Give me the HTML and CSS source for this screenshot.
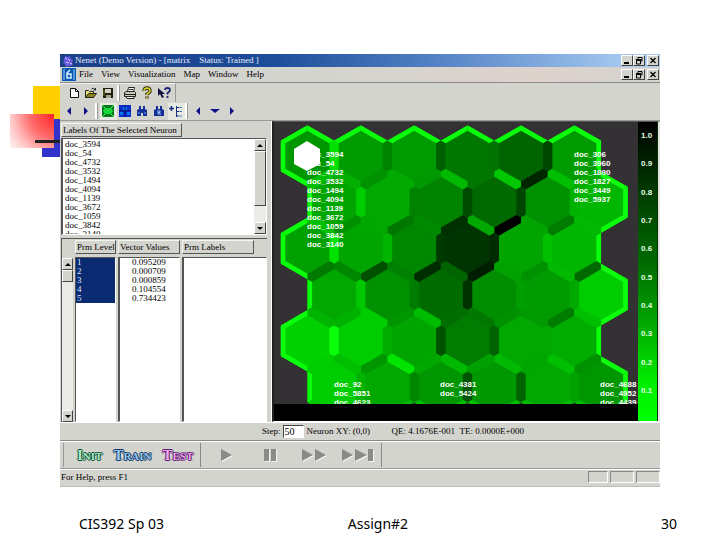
FILE: index.html
```html
<!DOCTYPE html>
<html lang="en">
<head>
<meta charset="utf-8">
<title>CIS392 Sp 03 - Assign#2</title>
<link rel="stylesheet" href="styles.css">
</head>
<body>
<main class="slide">
  <div class="deco" aria-hidden="true">
    <span class="deco-yellow"></span><span class="deco-blue"></span><span class="deco-red"></span><span class="deco-line"></span>
  </div>

  <section class="window">
    <header class="titlebar">
      <svg class="app-icon" viewBox="0 0 12 12"><path d="M3 1l3 1 2-1 1 3 2 1-1 3 1 2-3 1-2 0-2 1-1-3-2-1 1-3z" fill="#6b5be0"/><path d="M3 3l2 1M6 4l2 2M4 7l3 1M8 8l2 1" stroke="#d5c8ff"/></svg>
      <h1>Nenet (Demo Version) - [matrix&nbsp;&nbsp;&nbsp; Status: Trained ]</h1>
      <div class="controls">
        <button aria-label="Minimize"><svg viewBox="0 0 10 9"><path d="M2 7h5" stroke="#000" stroke-width="2"/></svg></button>
        <button aria-label="Restore"><svg viewBox="0 0 10 9"><path d="M4 3V1.500h4V5H6.500M2.500 4h4v4h-4z" fill="none" stroke="#000"/><path d="M2 4h5" stroke="#000" stroke-width="2"/></svg></button>
        <button class="close" aria-label="Close"><svg viewBox="0 0 10 9"><path d="M2.500 2l5 5M7.500 2l-5 5" stroke="#000" stroke-width="1.300"/></svg></button>
      </div>
    </header>
    <nav class="menubar">
      <svg class="doc-icon" viewBox="0 0 14 13"><path d="M0 0h14v13H0z" fill="#0a58b4"/><path d="M2 1v11M12 1v11" stroke="#9ad0f5"/><path d="M8 2L5 5v5h4V6H5" fill="none" stroke="#d8f4ff" stroke-width="1.500"/></svg>
      <div class="menus">
        <button>File</button><button>View</button><button>Visualization</button><button>Map</button><button>Window</button><button>Help</button>
      </div>
      <div class="controls">
        <button aria-label="Minimize map"><svg viewBox="0 0 10 9"><path d="M2 7h5" stroke="#000" stroke-width="2"/></svg></button>
        <button aria-label="Restore map"><svg viewBox="0 0 10 9"><path d="M4 3V1.500h4V5H6.500M2.500 4h4v4h-4z" fill="none" stroke="#000"/><path d="M2 4h5" stroke="#000" stroke-width="2"/></svg></button>
        <button class="close" aria-label="Close map"><svg viewBox="0 0 10 9"><path d="M2.500 2l5 5M7.500 2l-5 5" stroke="#000" stroke-width="1.300"/></svg></button>
      </div>
    </nav>

    <div class="toolbar files">
      <button aria-label="New"><svg viewBox="0 0 14 14"><path d="M3.500 2.500h5l3 3v6h-8z" fill="#fff" stroke="#111"/><path d="M8.500 2.500v3h3" fill="none" stroke="#111"/></svg></button>
      <button aria-label="Open"><svg viewBox="0 0 14 14"><path d="M1.500 11.500v-7h3l1 1h4v2" fill="#e8e070" stroke="#222"/><path d="M1.500 11.500l3-4h8l-3 4z" fill="#8c8410" stroke="#222"/><path d="M7.500 3q2-2 4 1m0-2v2H9.500" fill="none" stroke="#222"/></svg></button>
      <button aria-label="Save"><svg viewBox="0 0 14 14"><path d="M2 2h10v10H2z" fill="#202010"/><path d="M4 3h6v4H4z" fill="#d4d4c4"/><path d="M5 9h5v3H5z" fill="#a8a890"/><path d="M3 4v6" stroke="#77751b"/></svg></button>
      <span class="sep"></span>
      <button aria-label="Print"><svg viewBox="0 0 14 14"><path d="M4.500 5.500l1-4h6l-1 4" fill="#fff" stroke="#222"/><path d="M1.500 6.500l2-1h8l1 1v4h-11z" fill="#c9c9b8" stroke="#222"/><path d="M3 10.500h8v2H4zM2 8.500h10M6 3.500h4" fill="#fff" stroke="#222"/></svg></button>
      <button aria-label="About"><svg viewBox="0 0 14 14"><path d="M4 5q0-3 3-3t3 3q0 1.500-3 3v1M7 10.500v2" fill="none" stroke="#2b2a08" stroke-width="3.400"/><path d="M4 5q0-3 3-3t3 3q0 1.500-3 3v1M7 11v1.500" fill="none" stroke="#ded432" stroke-width="1.500"/></svg></button>
      <button aria-label="Context help"><svg viewBox="0 0 14 14"><path d="M1 2v8l2-2 2 4 2-1-2-3h3z" fill="#111144"/><path d="M8 4q0-2 2.500-2T13 4q0 1.500-2.500 3v1.500M10.500 10v2" fill="none" stroke="#1b2470" stroke-width="1.800"/></svg></button>
    </div>
    <div class="toolbar views">
      <button aria-label="Previous"><svg viewBox="0 0 14 14"><path d="M9 3v8L5 7z" fill="#10108c"/></svg></button>
      <button aria-label="Next"><svg viewBox="0 0 14 14"><path d="M5 3v8l4-4z" fill="#10108c"/></svg></button>
      <span class="sep"></span>
      <button class="pressed" aria-label="Hexagon view"><svg viewBox="0 0 14 14"><path d="M1 1h12v12H1z" fill="#087820"/><path d="M4 4h6l2 3-2 3H4L2 7z" fill="#18d838"/><path d="M1 1l3 3M13 1l-3 3M1 13l3-3M13 13l-3-3" stroke="#40ff50"/></svg></button>
      <button aria-label="Plane view"><svg viewBox="0 0 14 14"><path d="M1 1h12v12H1z" fill="#0c2cc8"/><path d="M5 3h4v3H5zM2 8h3v3H2zM9 8h3v3H9z" fill="#0878f0"/><path d="M1 7h12M7 1v12" stroke="#061270"/></svg></button>
      <button aria-label="Find"><svg viewBox="0 0 14 14"><path d="M2 6l2-1V2h2v3h2V2h2v3l2 1v6H8V9H6v3H2z" fill="#123096"/><path d="M4 8v2M10 8v2" stroke="#7ba2ed"/></svg></button>
      <button aria-label="Find next"><svg viewBox="0 0 14 14"><path d="M2 6l2-1V2h2v3h2V2h2v3l2 1v6H2z" fill="#123096"/><path d="M5 7h3v1.500H6V10h3" fill="none" stroke="#a7c5ff"/></svg></button>
      <button class="pressed" aria-label="Labels"><svg viewBox="0 0 14 14"><path d="M0 4.500h5M2.500 2v5" stroke="#183080" stroke-width="1.500"/><path d="M7.500 2v11M7.500 3.500h3M7.500 7.500h3M7.500 12h3" fill="none" stroke="#183080"/><path d="M11 3.500h2M11 7.500h2M11 12h2" stroke="#4779c8"/></svg></button>
      <span class="sep"></span>
      <button aria-label="Left"><svg viewBox="0 0 14 14"><path d="M9 3v8L5 7z" fill="#10108c"/></svg></button>
      <button aria-label="Down"><svg viewBox="0 0 14 14"><path d="M2 5h10L7 9z" fill="#10108c"/></svg></button>
      <button aria-label="Right"><svg viewBox="0 0 14 14"><path d="M5 3v8l4-4z" fill="#10108c"/></svg></button>
    </div>

    <div class="workspace">
      <div class="side">
        <button class="column-head wide">Labels Of The Selected Neuron</button>
        <div class="labels-box">
          <ul>
            <li>doc_3594</li><li>doc_54</li><li>doc_4732</li><li>doc_3532</li><li>doc_1494</li><li>doc_4094</li><li>doc_1139</li><li>doc_3672</li><li>doc_1059</li><li>doc_3842</li><li>doc_3140</li>
          </ul>
          <div class="scroll">
            <button aria-label="Scroll up"><svg viewBox="0 0 8 8"><path d="M1 6h6L4 3z"/></svg></button>
            <span class="thumb long"></span><span class="track"></span>
            <button aria-label="Scroll down"><svg viewBox="0 0 8 8"><path d="M1 3h6L4 6z"/></svg></button>
          </div>
        </div>
        <div class="params">
          <div class="scroll">
            <button aria-label="Scroll parameters up"><svg viewBox="0 0 8 8"><path d="M1 6h6L4 3z"/></svg></button>
            <span class="thumb"></span><span class="track"></span>
            <button aria-label="Scroll parameters down"><svg viewBox="0 0 8 8"><path d="M1 3h6L4 6z"/></svg></button>
          </div>
          <div class="column level">
            <button class="column-head">Prm Level</button>
            <ul><li>1</li><li>2</li><li>3</li><li>4</li><li>5</li></ul>
          </div>
          <div class="column values">
            <button class="column-head">Vector Values</button>
            <ul><li>0.095209</li><li>0.000709</li><li>0.000859</li><li>0.104554</li><li>0.734423</li></ul>
          </div>
          <div class="column names">
            <button class="column-head">Prm Labels</button>
            <ul></ul>
          </div>
        </div>
      </div>

      <div class="map-pane">
        <svg class="map" id="map" viewBox="0 0 364 299" role="img" aria-label="Neuron map"></svg>
        <div class="scale">
          <span>1.0</span><span>0.9</span><span>0.8</span><span>0.7</span><span>0.6</span><span>0.5</span><span>0.4</span><span>0.3</span><span>0.2</span><span>0.1</span>
        </div>
      </div>
    </div>

    <div class="stepbar">
      <label for="step">Step:</label><input id="step" type="text" value="50">
      <span class="neuron">Neuron XY: (0,0)</span>
      <span class="error">QE: 4.1676E-001</span>
      <span>TE: 0.0000E+000</span>
    </div>

    <div class="playbar">
      <div class="modes">
        <button class="init">Init</button><button class="train">Train</button><button class="test">Test</button>
      </div>
      <div class="transport">
        <button aria-label="Play"><svg viewBox="0 0 34 16"><path d="M12 2v12l11-6z"/></svg></button>
        <button aria-label="Pause"><svg viewBox="0 0 34 16"><path d="M11 2h5v12h-5zM18 2h5v12h-5z"/></svg></button>
        <button aria-label="Fast forward"><svg viewBox="0 0 34 16"><path d="M5 2v12l11-6zM18 2v12l11-6z"/></svg></button>
        <button aria-label="To the end"><svg viewBox="0 0 34 16"><path d="M1 2v12l11-6zM14 2v12l12-6zM27 2h5v12h-5z"/></svg></button>
      </div>
    </div>

    <footer class="status">
      <span class="help">For Help, press F1</span>
      <span class="cell"></span><span class="cell"></span><span class="cell"></span>
    </footer>
  </section>

  <footer class="slide-footer">
    <span>CIS392 Sp 03</span><span>Assign#2</span><span>30</span>
  </footer>
</main>
<script src="map.js"></script>
</body>
</html>
```
FILE: styles.css
```css
* { box-sizing: border-box; }
body {
  margin: 0;
  background: #fff;
  color: #000;
  font-family: "Liberation Serif", serif;
  font-size: 9px;
  line-height: 9px;
}
button {
  margin: 0;
  padding: 0;
  border: 0;
  background: none;
  color: inherit;
  font: inherit;
}
svg { display: block; }
ul { margin: 0; padding: 0; list-style: none; }
.slide { position: relative; padding: 54px 60px 0; }

.deco span { position: absolute; }
.deco-yellow { left: 33px; top: 86px; width: 54px; height: 54px; background: #ffcf00; }
.deco-blue { left: 42px; top: 119px; width: 46px; height: 38px; background: #3333cc; }
.deco-red {
  left: 10px; top: 114px; width: 44px; height: 34px;
  background: radial-gradient(circle at 100% 0, #ff2c2c 5%, #ff7070 45%, #ffc4c4 75%, #fff 105%);
}
.deco-line { left: 35px; top: 140px; width: 54px; height: 3px; background: #222; }

.window { position: relative; background: #d4d4ce; }

.titlebar {
  display: flex;
  align-items: center;
  height: 13px;
  padding: 0 1px 0 2px;
  gap: 1px;
  background: linear-gradient(90deg, #1c3f88, #1d4c98 35%, #5280c4 62%, #a6caf0 95%);
}
.titlebar h1 { flex: 1; margin: 0; color: #e4ecff; font-size: 9px; font-weight: normal; line-height: 13px; }
.app-icon { width: 12px; height: 12px; }
.controls { display: flex; }
.controls button, .scroll button, .thumb {
  background: #d4d4ce;
  border: 1px solid;
  border-color: #fff #444 #444 #fff;
}
.controls button { width: 12px; height: 11px; }
.controls .close { margin-left: 2px; }
.menubar {
  display: flex;
  align-items: center;
  height: 16px;
  padding: 0 1px 0 2px;
  background: linear-gradient(90deg, #d4d4ce 45%, #dfd2cd 80%, #d4d4ce);
  border-bottom: 1px solid #888;
}
.doc-icon { width: 14px; height: 13px; }
.menus { display: flex; flex: 1; gap: 8px; padding-left: 3px; }

.toolbar { display: flex; align-items: center; height: 19px; width: max-content; border-top: 1px solid #f4f4f0; }
.toolbar button { width: 17px; height: 17px; padding: 1px; }
.toolbar svg { width: 14px; height: 14px; }
.toolbar .pressed { background: #e8e8e3; }
.files { padding: 0 2px 0 6px; border-right: 1px solid #999; }
.views { height: 18px; padding-left: 1px; border-top: 0; }
.sep { width: 5px; height: 16px; border-left: 2px solid #fff; border-right: 1px solid #d4d4ce; box-shadow: inset 1px 0 #999; }

.workspace { display: grid; grid-template-columns: 212px 1fr; border-top: 1px solid #999; border-bottom: 1px solid #fff; }
.side { display: flex; flex-direction: column; padding: 2px 4px 0 1px; border-right: 1px solid #fff; }
.column-head {
  height: 14px;
  padding: 0 1px;
  background: #d4d4ce;
  border: 1px solid;
  border-color: #f4f4f0 #555 #555 #f4f4f0;
  text-align: left;
  white-space: nowrap;
}
.wide { align-self: flex-start; width: 121px; }
.labels-box {
  display: flex;
  height: 97px;
  margin-top: 1px;
  background: #fff;
  border: 1px solid;
  border-color: #555 #fff #fff #555;
  border-left-width: 2px;
  overflow: hidden;
}
.labels-box ul { flex: 1; padding: 1px 0 0 2px; }
.scroll { display: flex; flex-direction: column; width: 12px; }
.scroll button { height: 12px; padding: 1px; }
.scroll svg { width: 8px; height: 8px; }
.thumb { height: 12px; }
.long { height: 55px; }
.track { flex: 1; background: #ebebe8; }
.params {
  display: flex;
  gap: 2px;
  flex: 1;
  margin-top: 3px;
  border-top: 1px solid #555;
}
.params .scroll { padding-top: 19px; border-left: 1px solid #555; }
.column { display: flex; flex-direction: column; gap: 3px; padding-top: 1px; }
.column ul { flex: 1; background: #fff; border: 1px solid; border-color: #555 #fff #fff #555; }
.level { width: 41px; }
.level li { background: #0a2a72; color: #dfe8ff; padding-left: 1px; }
.values { width: 62px; }
.values ul { border-left-width: 2px; }
.values li { padding-left: 12px; }
.names { flex: 1; }
.names ul { border-left-width: 2px; }
.names .column-head { align-self: flex-start; width: 72px; }

.map-pane {
  display: flex;
  align-items: stretch;
  border: solid;
  border-width: 1px 2px 1px 2px;
  border-color: #555 #e4e4df #fff #222;
}
.map { flex: 1; min-width: 0; }
.map text { font: bold 8px "Liberation Sans", sans-serif; fill: #fff; }
.scale {
  display: flex;
  flex-direction: column;
  justify-content: space-between;
  width: 20px;
  padding: 9px 0 26px 3px;
  background: linear-gradient(#000, #004000 25%, #006a00 47%, #00a000 65%, #00f000 88%, #00ff00);
  border-right: 1px solid #063006;
  color: #e4ffe4;
  font: bold 8px/9px "Liberation Sans", sans-serif;
}

.stepbar {
  display: flex;
  align-items: center;
  height: 18px;
  padding-left: 202px;
  border-bottom: 1px solid #888;
  white-space: nowrap;
}
.stepbar input {
  width: 21px;
  height: 13px;
  margin: 0 3px 0 2px;
  padding: 0 1px;
  border: 1px solid;
  border-color: #444 #fff #fff #444;
  background: #fff;
  font: inherit;
  font-size: 10px;
}
.neuron { width: 85px; }
.error { width: 68px; }

.playbar { display: flex; align-items: center; height: 28px; padding-left: 3px; border-top: 1px solid #fff; border-bottom: 1px solid #999; }
.modes, .transport { display: flex; align-items: center; height: 24px; border-right: 1px solid #888; }
.modes { gap: 11px; width: 138px; padding-left: 13px; border-left: 1px solid #999; }
.modes button { font-size: 15px; line-height: 14px; font-weight: bold; font-variant: small-caps; }
.init { color: #a8ecc8; text-shadow: 1px 0 #064a2c, -1px 0 #064a2c, 0 1px #064a2c, 0 -1px #064a2c; }
.train { color: #9ccbf4; text-shadow: 1px 0 #0b315e, -1px 0 #0b315e, 0 1px #0b315e, 0 -1px #0b315e; }
.test { color: #f0a8ee; text-shadow: 1px 0 #55156a, -1px 0 #55156a, 0 1px #55156a, 0 -1px #55156a; }
.transport { gap: 10px; padding: 0 6px 0 8px; }
.transport svg { width: 34px; height: 16px; fill: #8a8a88; filter: drop-shadow(1px 1px #f4f4f0); }

.status { display: flex; gap: 2px; height: 18px; padding: 1px 0 3px 1px; border-top: 1px solid #fff; border-bottom: 1px solid #bbb; }
.help { flex: 1; padding-top: 2px; }
.cell { width: 24px; border: 1px solid; border-color: #888 #fff #fff #888; }
.cell:nth-child(2) { width: 20px; }

.slide-footer {
  display: grid;
  grid-template-columns: 1fr auto 1fr;
  padding: 27px 0 0;
  margin: 0 -17px 0 19px;
  font: 14px/20px "Noto Sans", sans-serif;
}
.slide-footer span:last-child { text-align: right; }
```
FILE: map.js
```js
// Green level of each neuron, row by row; odd rows sit half a cell to the right.
const cells = [
  [150, 155, 155, 120, 100, 155],
  [165, 168, 132, 105, 145, 182],
  [160, 165, 135, 52, 165, 182],
  [168, 145, 108, 142, 155, 205],
  [210, 205, 165, 125, 168, 172],
  [205, 168, 150, 152, 168, 150]
];
// Distance level of the border towards each neighbour.
const east = [
  [225, 132, 95, 115, 72, 255],
  [205, 130, 75, 70, 178, 255],
  [225, 180, 58, 42, 192, 255],
  [200, 125, 50, 158, 168, 255],
  [250, 172, 82, 98, 168, 255],
  [180, 135, 85, 100, 162, 255]
];
const southEast = [
  [190, 145, 152, 120, 38, 170],
  [145, 120, 48, 0, 125, 255],
  [122, 80, 45, 30, 145, 105],
  [178, 150, 110, 145, 125, 255],
  [205, 150, 168, 160, 165, 145],
  [200, 185, 190, 190, 190, 190]
];
const southWest = [
  [255, 175, 170, 185, 200, 190],
  [190, 168, 138, 168, 165, 185],
  [255, 135, 128, 100, 162, 185],
  [180, 205, 188, 120, 155, 190],
  [255, 190, 228, 185, 185, 190],
  [200, 190, 190, 190, 190, 190]
];
const labels = [
  [33, 35, ["doc_3594", "doc_54", "doc_4732", "doc_3532", "doc_1494", "doc_4094", "doc_1139", "doc_3672", "doc_1059", "doc_3842", "doc_3140"]],
  [300, 35, ["doc_306", "doc_3960", "doc_1890", "doc_1827", "doc_3449", "doc_5937"]],
  [60, 265, ["doc_92", "doc_5851", "doc_4623"]],
  [166, 265, ["doc_4381", "doc_5424"]],
  [326, 265, ["doc_4688", "doc_4952", "doc_4439"]]
];
const HALF = 26.7, SIDE = 15.4, BAR = 4.7;
const corners = [[0, -2], [1, -1], [1, 1], [0, 2], [-1, 1], [-1, -1]];
const rgb = g => g > 245 ? "rgb(10,255,10)" : `rgb(0,${g},0)`;

// A border bar: both ends taper to the corner where three cells meet.
function barPath([ax, ay], [bx, by]) {
  const len = Math.hypot(bx - ax, by - ay);
  const ux = (bx - ax) / len, uy = (by - ay) / len;
  const inset = BAR / Math.sqrt(3);
  const at = (x, y, along, across) => [x + ux * along - uy * across, y + uy * along + ux * across];
  return "M" + [
    [ax, ay], at(ax, ay, inset, BAR), at(bx, by, -inset, BAR),
    [bx, by], at(bx, by, -inset, -BAR), at(ax, ay, inset, -BAR)
  ].join("L") + "Z";
}

let fills = "", bars = "", outline = "";
cells.forEach((row, r) => row.forEach((level, c) => {
  const odd = r % 2 === 1;
  const cx = 33.4 + (2 * c + (odd ? 1 : 0)) * HALF;
  const cy = 34 + r * 3 * SIDE;
  const p = corners.map(([x, y]) => [cx + x * HALF, cy + y * SIDE]);
  const bar = (i, g) => { bars += `<path d="${barPath(p[i], p[(i + 1) % 6])}" fill="${rgb(g)}"/>`; };
  outline += `M${p.join("L")}Z`;
  fills += `<path d="M${p.join("L")}Z" fill="${rgb(level)}"/>`;
  if (r === 0 || (c === 0 && !odd)) bar(5, 255);
  if (r === 0 || (c === 5 && odd)) bar(0, 255);
  if (c === 0) bar(4, 255);
  bar(1, east[r][c]);
  bar(2, southEast[r][c]);
  bar(3, southWest[r][c]);
}));

let text = "";
for (const [x, y, lines] of labels)
  lines.forEach((line, i) => { text += `<text x="${x}" y="${y + 9 * i}">${line}</text>`; });

document.getElementById("map").innerHTML = `
  <defs>
    <clipPath id="cells"><path d="${outline}"/></clipPath>
    <clipPath id="view"><path d="M0 0H364V282H0Z"/></clipPath>
  </defs>
  <path d="M0 0H364V282H0Z" fill="#343134"/>
  <g clip-path="url(#view)">
    <g clip-path="url(#cells)">${fills}${bars}</g>
    <path d="M33 19l13 8v15l-13 7-13-7V27z" fill="#fff"/>
    ${text}
  </g>
  <path d="M0 282H364V299H0Z" fill="#000"/>`;
```
